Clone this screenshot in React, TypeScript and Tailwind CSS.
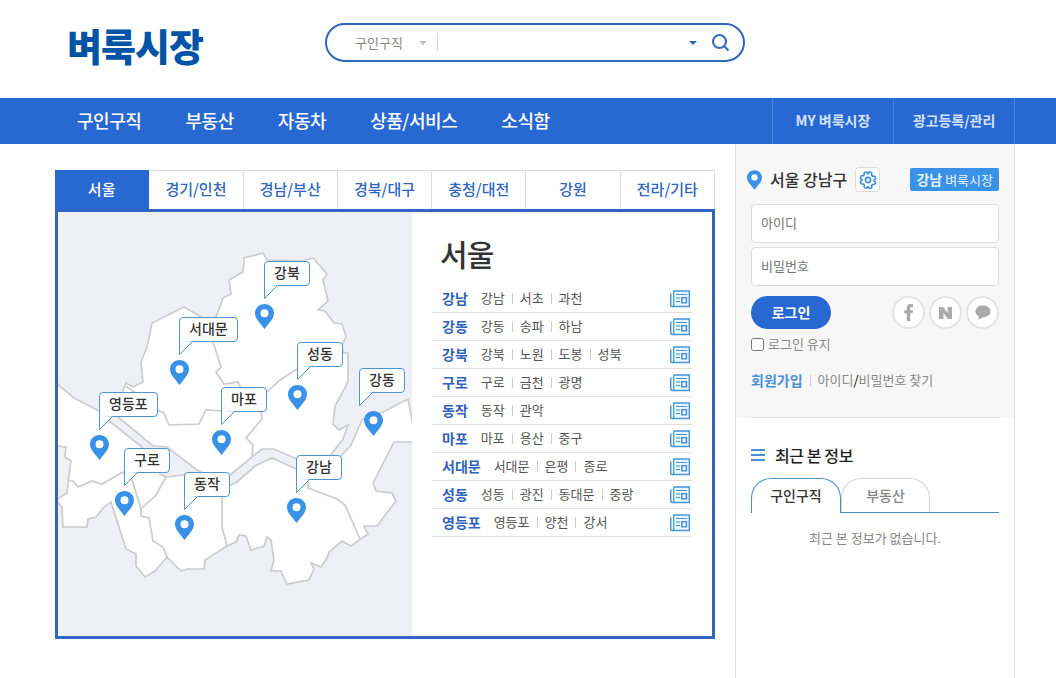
import { clsx } from "clsx";

const menus = ["구인구직", "부동산", "자동차", "상품/서비스", "소식함"];

const regionTabs = [
  "서울",
  "경기/인천",
  "경남/부산",
  "경북/대구",
  "충청/대전",
  "강원",
  "전라/기타",
];

const areas = [
  { name: "강남", items: ["강남", "서초", "과천"] },
  { name: "강동", items: ["강동", "송파", "하남"] },
  { name: "강북", items: ["강북", "노원", "도봉", "성북"] },
  { name: "구로", items: ["구로", "금천", "광명"] },
  { name: "동작", items: ["동작", "관악"] },
  { name: "마포", items: ["마포", "용산", "중구"] },
  { name: "서대문", items: ["서대문", "은평", "종로"] },
  { name: "성동", items: ["성동", "광진", "동대문", "중랑"] },
  { name: "영등포", items: ["영등포", "양천", "강서"] },
];

// x, y: top left corner of the label; the pin hangs under its left edge
const pins = [
  { name: "강북", x: 206, y: 49 },
  { name: "서대문", x: 121, y: 105 },
  { name: "성동", x: 239, y: 130 },
  { name: "강동", x: 301, y: 156, shift: 14 },
  { name: "마포", x: 163, y: 175 },
  { name: "영등포", x: 41, y: 180 },
  { name: "구로", x: 66, y: 236 },
  { name: "강남", x: 238, y: 243 },
  { name: "동작", x: 126, y: 260 },
];

function PinIcon({ className }: { className?: string }) {
  return (
    <svg viewBox="0 0 19 25" className={className} aria-hidden="true">
      <path
        fill="#3a92e8"
        fillRule="evenodd"
        d="M9.5 0C4.2 0 0 4.1 0 9.2c0 2.6 1 4.6 2.6 7L9.5 25l6.9-8.8c1.6-2.4 2.6-4.4 2.6-7C19 4.1 14.8 0 9.5 0Zm0 5.2a4 4 0 1 1 0 8 4 4 0 0 1 0-8Z"
      />
    </svg>
  );
}

function GearIcon() {
  return (
    <svg viewBox="0 0 18 18" className="size-[18px]" fill="none" stroke="#3f8fdc" strokeWidth="1.6" strokeLinejoin="round" aria-hidden="true">
      <path d="M6.3 1h1.6l.6 1.6h1L10.100 1h1.600l1.100 1-.3 1.900.9 1.200 2.100.1 1 1.500v1.100l-1.500 1.200v.8l1.500 1.200v.9l-1 1.500-2 .1-1 1.200.3 1.800-1.200 1h-1.500l-.7-1.600h-1L7.800 17H6.300l-1.200-1 .3-1.800-1-1.200-2-.1-1-1.500v-.9l1.600-1.200v-.8L1.400 7.300V6.200l1-1.500 2.100-.1.900-1.100-.3-1.500Z" />
      <circle cx="9" cy="9" r="2.600" />
    </svg>
  );
}

function NewspaperIcon() {
  return (
    <svg viewBox="0 0 20 18" className="h-[18px] w-5" fill="none" stroke="#4a94dc" aria-hidden="true">
      <path fill="#e6f7ff" strokeWidth="1.400" d="M3.700 1h15.600v15.500H2.300q-1.600 0-1.600-2V3.500" />
      <path strokeWidth="1.200" d="M3.700 1v15.500M6 4.500h11M6 8h4M6 11.500h4" />
      <path fill="#fff" strokeWidth="1.600" d="M11.800 7.800h4.600v5h-4.600z" />
    </svg>
  );
}

function Header() {
  return (
    <header className="flex h-[98px] items-start pl-[67px]">
      <a href="#" className="w-[258px] pt-[19px] text-[38px] leading-[52px] font-black tracking-tight text-[#0054a6]">
        벼룩시장
      </a>

      <form className="mt-[23px] flex h-[39px] w-[420px] items-center rounded-full border-2 border-[#2f66bf] pr-3 pl-7">
        <select aria-label="검색 분류" className="w-[60px] appearance-none text-[13px] text-[#888] outline-0">
          <option>구인구직</option>
        </select>
        <span className="ml-1 border-x-4 border-t-4 border-x-transparent border-t-[#bbb]" />
        <span className="ml-2.5 h-[17px] w-px bg-[#c5d5e0]" />
        <input type="text" aria-label="검색어" className="min-w-0 flex-1 px-3 text-[13px] outline-0" />
        <button type="button" aria-label="검색어 목록" className="p-1">
          <span className="block border-x-4 border-t-4 border-x-transparent border-t-[#2f66bf]" />
        </button>
        <button type="button" aria-label="검색" className="ml-2.5">
          <svg viewBox="0 0 20 20" className="size-5" fill="none" stroke="#3a6fc0" strokeWidth="2.200" aria-hidden="true">
            <circle cx="8.500" cy="8.500" r="6.500" />
            <path d="m13 13 4.500 4.500" />
          </svg>
        </button>
      </form>
    </header>
  );
}

function Navigation() {
  return (
    <nav className="flex h-[46px] items-stretch bg-[#2868d2] pr-[41px] pl-[77px]">
      <div className="flex flex-1 items-center gap-11 pb-0.5 text-lg leading-6 font-medium tracking-tight text-white">
        {menus.map((menu) => (
          <a key={menu} href="#">
            {menu}
          </a>
        ))}
      </div>
      <a href="#" className="flex w-[121px] items-center justify-center border-l border-[#4a80da] pb-0.5 text-sm font-bold text-[#d3e2fa]">
        MY 벼룩시장
      </a>
      <a href="#" className="flex w-[122px] items-center justify-center border-x border-[#4a80da] pb-0.5 text-sm font-bold text-[#d3e2fa]">
        광고등록/관리
      </a>
    </nav>
  );
}

function SeoulMap() {
  return (
    <div className="relative h-[424px] w-[354px] shrink-0 bg-[#eff0f6]">
      <svg viewBox="0 0 354 424" className="size-full" fill="#fff" stroke="#ccc" strokeWidth="1.700" aria-hidden="true">
        {/* north of the river */}
        <path d="M65 178 68 171 75 175 85 170 83 150 89 135 94 111 126 95 140 103 155 112 160 100 165 86 173 82 171 68 185 60 186 46 205 41 209 48 245 49 255 46 269 62 265 68 270 89 260 98 267 99 276 111 284 112 288 125 284 133 285 141 290 141 290 170 277 194 275 212 281 218 290 213 285 227 272 244 255 252 239 247 216 237 204 237 194 245 172 263 155 265 139 258 109 235 95 234 60 205Z" />
        {/* south of the river */}
        <path d="M-2 171 16 186 41 199 50 208 84 235 102 262 108 265 126 263 150 272 164 277 179 270 197 254 214 246 238 257 262 262 282 245 293 233 304 208 325 200 350 187 356 218V230H336L315 271 318 279 334 281 338 289 319 314H306L310 322 293 334 284 329 271 340 269 346 263 355 253 351 256 357 251 368 229 372 223 359H213L216 348 213 328 209 325 206 334 193 338 188 324 181 323 178 330 169 334 147 348 146 357H130L123 359 109 345 97 359 87 365 78 354V342L68 337 53 290 46 295 38 305 30 307 29 315H5L4 295 -2 288 9 281 11 263 13 249 7 245 8 235 -2 234Z" />
        {/* district borders */}
        <g fill="none">
          <path d="M68 174 101 199 106 201 111 213 141 212 148 198 164 199" />
          <path d="M150 108 155 130 163 155 158 160 166 172 180 170 184 178 203 200 204 207 188 226 195 233 194 245" />
          <path d="M203 190 209 180 222 168 239 157" />
          <path d="M11 269H15L20 275 34 269 44 272 65 260 74 268 83 297V304L91 306 95 329 105 335 109 345" />
          <path d="M108 265 98 283 83 297" />
          <path d="M164 277V315L169 334" />
          <path d="M250 262V276L279 287 287 293 302 327" />
        </g>
      </svg>

      {pins.map((pin) => (
        <a key={pin.name} href="#" className="absolute" style={{ left: pin.x, top: pin.y }}>
          <span className="block rounded-sm rounded-bl-none border border-[#4d96d6] bg-white px-[9px] pb-0.5 text-sm leading-[21px] font-medium text-[#333]">
            {pin.name}
          </span>
          <svg viewBox="0 0 14 14" className="-mt-px block size-3.5" fill="#fff" aria-hidden="true">
            <path d="M.5 0V13.500L13.500 .5" stroke="#4d96d6" />
            <path d="M1 0H13L1 1Z" />
          </svg>
          <span className="block pt-[5px]" style={{ marginLeft: pin.shift ?? 0 }}>
            <PinIcon className="-ml-[9px] h-[25px] w-[19px]" />
          </span>
        </a>
      ))}
    </div>
  );
}

function AreaList() {
  return (
    <div className="flex-1 px-5 pt-[18px]">
      <h2 className="pl-2 text-[30px] leading-[46px] font-medium tracking-tight text-[#333]">서울</h2>
      <ul className="mt-[9px] text-[13px]">
        {areas.map((area) => (
          <li key={area.name} className="flex h-7 items-center border-b border-[#e3e3e3] pr-0.5 pl-2.5">
            <a href="#" className="mr-[13px] pb-0.5 text-sm font-bold text-[#2f63be]">
              {area.name}
            </a>
            {area.items.map((item, i) => (
              <span key={item} className="flex items-center text-[#555]">
                {i > 0 && <span className="mx-[7px] h-[11px] w-px bg-[#ccc]" />}
                <a href="#" className="pb-0.5">
                  {item}
                </a>
              </span>
            ))}
            <a href="#" className="ml-auto" aria-label={area.name}>
              <NewspaperIcon />
            </a>
          </li>
        ))}
      </ul>
    </div>
  );
}

function RegionPanel() {
  return (
    <section className="min-w-0 flex-1 pt-[26px]">
      <div className="flex h-[39px]">
        {regionTabs.map((tab, i) => (
          <button
            key={tab}
            type="button"
            className={clsx(
              "flex-1 border-t border-r pb-0.5 text-[15px] font-medium",
              i === 0 ? "border-[#2868d2] bg-[#2868d2] text-white" : "border-[#ddd] text-[#2f66bf]"
            )}>
            {tab}
          </button>
        ))}
      </div>
      <div className="flex border-3 border-[#2f66c4]">
        <SeoulMap />
        <AreaList />
      </div>
    </section>
  );
}

function LoginBox() {
  const input =
    "block h-[39px] w-full rounded-sm border border-[#ddd] bg-white px-[9px] pb-0.5 text-[13px] placeholder:text-[#757575] outline-0";
  const social = "flex size-[33px] items-center justify-center rounded-full border-2 border-[#e4e4e4] bg-white";

  return (
    <div className="bg-[#f7f7f7] px-[15px] pt-[23px]">
      <div className="flex h-[25px] items-center">
        <PinIcon className="-ml-1 h-5 w-[15px]" />
        <span className="ml-2 pb-0.5 font-medium text-[#333]">서울 강남구</span>
        <button type="button" aria-label="지역 설정" className="ml-2 flex size-[25px] items-center justify-center rounded-sm border border-[#ddd] bg-white">
          <GearIcon />
        </button>
        <a href="#" className="ml-auto rounded-xs bg-[#3a92e8] px-1.5 text-[13px] leading-[23px] text-[#e3f2ff]">
          <b className="text-sm leading-[23px]">강남</b> 벼룩시장
        </a>
      </div>

      <form className="mt-3">
        <input type="text" aria-label="아이디" placeholder="아이디" className={input} />
        <input type="password" aria-label="비밀번호" placeholder="비밀번호" className={clsx(input, "mt-1")} />
        <div className="mt-2.5 flex items-center gap-1">
          <button type="button" className="mr-auto h-[33px] w-20 rounded-full bg-[#2868d2] pb-0.5 text-sm font-bold text-white">
            로그인
          </button>
          <button type="button" aria-label="페이스북 로그인" className={social}>
            <svg viewBox="0 0 10 18" className="h-[17px] w-2.5" fill="#aaa" aria-hidden="true">
              <path d="M2.600 18V9.800H0V6.500h2.600V4.600C2.600 1.500 4 0 6.800 0H9.200v3.100H7.700c-1.100 0-1.400.4-1.400 1.600v1.800h2.900l-.4 3.300H6.300V18Z" />
            </svg>
          </button>
          <button type="button" aria-label="네이버 로그인" className={social}>
            <svg viewBox="0 0 13 12" className="h-3 w-[13px]" fill="#aaa" aria-hidden="true">
              <path d="M0 0h4.200l4.400 6V0H13v12H8.800L4.400 6v6H0Z" />
            </svg>
          </button>
          <button type="button" aria-label="카카오 로그인" className={social}>
            <svg viewBox="0 0 16 15" className="h-[15px] w-4" fill="#aaa" aria-hidden="true">
              <path d="M8 .5c4.400 0 7.500 2.600 7.500 5.900S12.400 12.200 8 12.200L3.400 14.800l.4-3.500C1.800 10.300.5 8.500.5 6.400.500 3.100 3.600.5 8 .5Z" />
            </svg>
          </button>
        </div>
        <label className="mt-[5px] flex h-5 items-center gap-1 text-[13px] text-[#888]">
          <input type="checkbox" className="size-[13px]" />
          로그인 유지
        </label>
      </form>

      <div className="mt-4 flex h-5 items-center text-[13px] text-[#888]">
        <a href="#" className="text-sm font-bold text-[#4a8fdc]">
          회원가입
        </a>
        <span className="mx-[7px] h-[11px] w-px bg-[#ccc]" />
        <span>
          <a href="#">아이디</a>
          <span className="text-black">/</span>
          <a href="#">비밀번호 찾기</a>
        </span>
      </div>
      <hr className="mt-[27px] border-[#e0e0e0]" />
    </div>
  );
}

function RecentBox() {
  return (
    <div className="px-[15px] pt-[25px]">
      <h3 className="flex items-center gap-2.5 leading-6 font-medium tracking-tight text-[#222]">
        <svg viewBox="0 0 14 12" className="h-3 w-3.5" fill="#4a90d6" aria-hidden="true">
          <path d="M0 0h14v2H0zM0 5h14v2H0zM0 10h14v2H0z" />
        </svg>
        최근 본 정보
      </h3>
      <div className="mt-[11px] flex h-[35px] text-sm font-medium">
        <button type="button" className="w-[90px] rounded-t-[20px] border border-b-0 border-[#4a8fcc] pb-0.5 text-[#333]">
          구인구직
        </button>
        <div className="flex-1 border-b border-[#4a8fcc]">
          <button type="button" className="h-full w-[89px] rounded-t-[20px] border border-b-0 border-[#d5d5d5] pb-0.5 text-[#888]">
            부동산
          </button>
        </div>
      </div>
      <p className="mt-[15px] text-center text-[13px] leading-5 text-[#888]">최근 본 정보가 없습니다.</p>
    </div>
  );
}

export default function App() {
  return (
    <div className="flex min-h-screen flex-col bg-white font-['Noto_Sans_CJK_KR',sans-serif]">
      <Header />
      <Navigation />
      <main className="flex flex-1 gap-5 pr-[41px] pl-[55px]">
        <RegionPanel />
        <aside className="w-[280px] shrink-0 border-x border-[#e2e2e2]">
          <LoginBox />
          <RecentBox />
        </aside>
      </main>
    </div>
  );
}
